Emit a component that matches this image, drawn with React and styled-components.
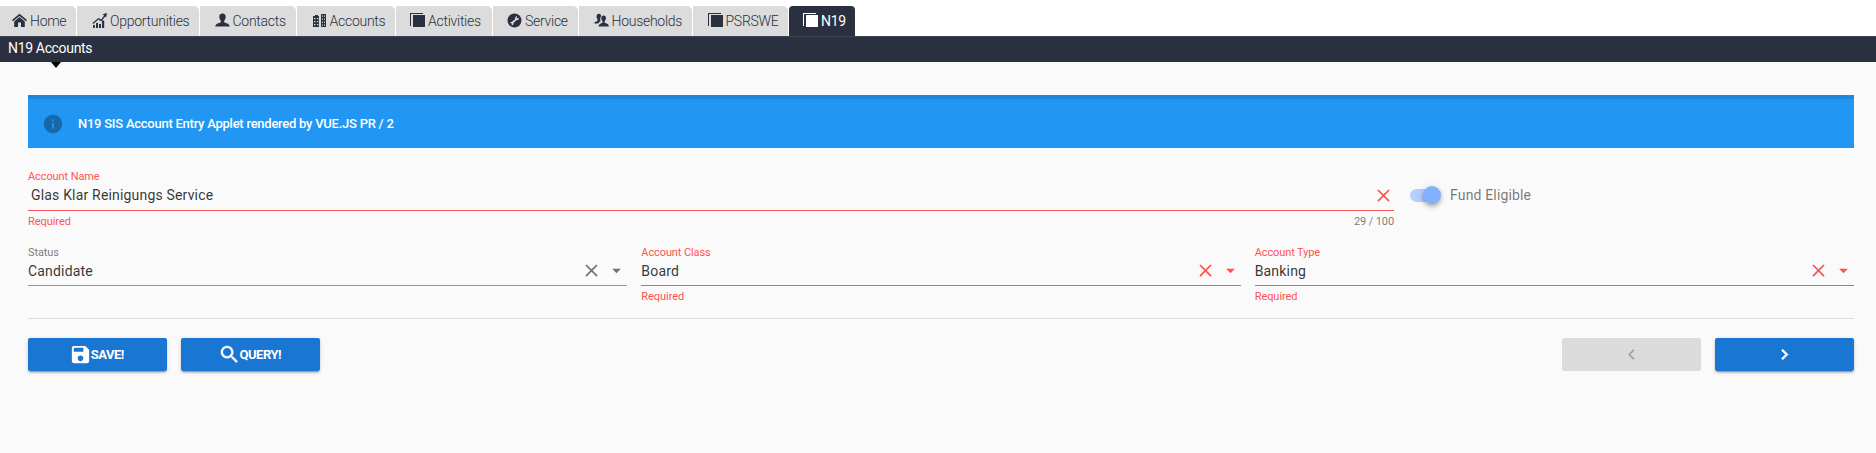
import React from 'react';
import styled, { createGlobalStyle, css } from 'styled-components';

const navy = '#2a3040';
const red = '#ff5252';
const blue = '#1976d2';

const GlobalStyle = createGlobalStyle`
  * { box-sizing: border-box; }
  body {
    margin: 0;
    background: #fafafa;
    font-family: Roboto, "Liberation Sans", sans-serif;
    color: rgba(0, 0, 0, 0.87);
  }
  svg { display: block; flex: none; }
`;

const Page = styled.div`
  width: 100%;
  height: 453px;
  overflow: hidden;
`;

const TabBar = styled.nav`
  display: flex;
  gap: 1px;
  height: 36px;
  padding-top: 6px;
  background: #fff;
`;

const Tab = styled.a`
  display: flex;
  align-items: center;
  width: ${(p) => p.$width}px;
  height: 30px;
  padding-left: ${(p) => p.$inset ?? 15}px;
  border-radius: 0 5px 0 0;
  background: ${(p) => (p.$active ? navy : '#dcdcdc')};
  color: ${(p) => (p.$active ? '#fff' : navy)};
  font-size: 14px;
  font-weight: ${(p) => (p.$active ? 400 : 300)};
  letter-spacing: -0.27px;
  white-space: nowrap;
  ${(p) => p.$active && css`border-radius: 4px 4px 0 0;`}
`;

const TabIcon = styled.svg`
  width: 15px;
  height: 15px;
  margin: 0 3px 1px 0;
  fill: currentColor;
`;

const SubBar = styled.div`
  position: relative;
  height: 26px;
  padding-left: 8px;
  background: ${navy};
  border-top: 1px solid #3f4453;
  color: #fff;
  font-size: 14px;
  line-height: 23px;
  letter-spacing: -0.34px;
`;

const Pointer = styled.span`
  position: absolute;
  left: 51px;
  top: 25px;
  border: 5px solid transparent;
  border-top: 6px solid #000;
  border-bottom: 0;
`;

const Content = styled.main`
  padding: 33px 22px 0 28px;
`;

const Banner = styled.div`
  display: flex;
  align-items: center;
  height: 53px;
  padding: 3px 0 0 14px;
  border-top: 4px solid #1e88dc;
  background: #2196f3;
  color: #fff;
  font-size: 13px;
  font-weight: 500;
`;

const BannerIcon = styled.svg`
  width: 22px;
  height: 22px;
  margin: 0 14px 2px 0;
  fill: rgba(0, 0, 0, 0.3);
`;

const BannerText = styled.span`
  line-height: 16px;
  margin-bottom: 2px;
  letter-spacing: -0.25px;
`;

const Row = styled.div`
  display: flex;
  gap: 14px;
  margin-top: ${(p) => p.$top}px;
`;

const FieldBox = styled.div`
  flex: ${(p) => (p.$width ? `0 0 ${p.$width}px` : '1 1 0')};
  min-width: 0;
  height: 61px;
  color: ${(p) => (p.$error ? red : 'rgba(0, 0, 0, 0.54)')};
`;

const Label = styled.div`
  height: 14px;
  padding-top: ${(p) => (p.$select ? 1 : 0)}px;
  font-size: 11px;
  line-height: 14px;
  letter-spacing: -0.1px;
`;

const Control = styled.div`
  display: flex;
  align-items: center;
  gap: 4px;
  height: 27px;
  padding-bottom: 4px;
  border-bottom: 1px solid ${(p) => (p.$error ? red : '#949494')};
`;

const Value = styled.span`
  flex: 1;
  padding: ${(p) => (p.$select ? 3 : 1)}px 0 0 ${(p) => p.$indent || 0}px;
  color: rgba(0, 0, 0, 0.8);
  font-size: 14px;
  line-height: 19px;
  letter-spacing: 0.18px;
`;

const FieldIcon = styled.svg`
  width: 21px;
  height: 21px;
  fill: currentColor;
`;

const Messages = styled.div`
  display: flex;
  justify-content: space-between;
  padding-top: 4px;
  font-size: 11px;
  line-height: 14px;
  letter-spacing: -0.05px;
`;

const Counter = styled.span`
  color: rgba(0, 0, 0, 0.54);
  letter-spacing: -0.1px;
`;

const SwitchLabel = styled.div`
  display: flex;
  align-items: center;
  height: 18px;
  margin: 16px 0 0 2px;
  color: rgba(0, 0, 0, 0.54);
  font-size: 14px;
  line-height: 18px;
  letter-spacing: 0.16px;
`;

const Track = styled.span`
  display: flex;
  align-items: center;
  justify-content: flex-end;
  width: 28px;
  height: 13px;
  margin-right: 12px;
  border-radius: 7px;
  background: #b5cfff;
`;

const Thumb = styled.span`
  flex: none;
  width: 18px;
  height: 18px;
  margin-right: -3px;
  border-radius: 50%;
  background: #82b1ff;
  box-shadow: 0 2px 4px -1px rgba(0, 0, 0, 0.2), 0 3px 5px rgba(0, 0, 0, 0.14),
    0 1px 8px rgba(0, 0, 0, 0.12);
`;

const Divider = styled.hr`
  height: 1px;
  margin: 12px 0 19px;
  border: 0;
  background: #dbdbdb;
`;

const Actions = styled.div`
  display: flex;
  gap: 14px;
`;

const Button = styled.button`
  display: flex;
  align-items: center;
  justify-content: center;
  width: 139px;
  height: 33px;
  padding: 0 0 1px;
  border: 0;
  border-radius: 2px;
  background: ${blue};
  color: #fff;
  font: 700 13px Roboto, "Liberation Sans", sans-serif;
  letter-spacing: -0.5px;
  box-shadow: 0 3px 1px -2px rgba(0, 0, 0, 0.2), 0 2px 2px rgba(0, 0, 0, 0.14),
    0 1px 5px rgba(0, 0, 0, 0.12);
  &:disabled {
    background: #dbdbdb;
    color: rgba(0, 0, 0, 0.26);
    box-shadow: none;
  }
`;

const ButtonIcon = styled.svg`
  width: ${(p) => p.$size}px;
  height: ${(p) => p.$size}px;
  margin: ${(p) => (p.$leading ? '0 -1.5px 0 -2px' : 0)};
  fill: currentColor;
`;

const Spacer = styled.span`
  flex: 1;
`;

const glyphs = {
  home: <path d="M7.500 .8 15 7l-1 1.200-6.500-5.300L1 8.200 0 7zM7.500 4l5.300 4.400V14H9V9.500H6V14H2.200V8.400z" />,
  chart: (
    <path d="M1 12h1.800v3H1zM4 10h2v5H4zM7 11h2v4H7zM10 7.500h2.200V15H10zM10.500 1.200 15 0l-.8 4.500-1-1.100-4 5L6.500 6.600 1.300 11l-.9-1L6.400 4.900 9 6.600l3.200-4z" />
  ),
  person: <path d="M7.500 .5c2.300 0 3.300 1.600 3.200 3.500-.1 2-.9 3-1.500 3.800v1.400c1.400.9 5.500 1.300 5.500 4.300H.3c0-3 4.100-3.400 5.500-4.300V7.800C5.200 7 4.400 6 4.300 4 4.200 2.100 5.200.5 7.500.5z" />,
  building: (
    <path fillRule="evenodd" d="M1 3h2V2h3v1h1v11H1zM9 1h5v13H9zM2 5v1.300h1.500V5zm3 0v1.300h1.300V5zM2 8v1.300h1.500V8zm3 0v1.300h1.300V8zm-3 3v1.300h1.500V11zm3 0v1.300h1.300V11zm5-8.500v1.300h1V2.500zm2 0v1.300h1V2.500zm-2 3v1.300h1V5.500zm2 0v1.300h1V5.500zm-2 3v1.300h1V8.500zm2 0v1.300h1V8.500zm-2 3v1.300h1v-1.300zm2 0v1.300h1v-1.300z" />
  ),
  square: <path d="M0 0h13v1H1v12H0zM3 2h12v12H3z" />,
  wrench: (
    <>
      <circle cx="7.500" cy="7.500" r="7" />
      <path fill="#dcdcdc" d="M3 9.200 5 8.800l3.300-2.800-.1-1.800L10 2.800l-.2 1.700 1 1 1.500-.5-1.200 2-1.800.3L6.500 10l-.3 1.700-1.700.7.4-1.500-.6-.6z" />
    </>
  ),
  people: (
    <>
      <path d="M4.800 .8c1.700 0 2.400 1.100 2.200 2.700-.9 1.300-1 3-.4 4.600L4 10.500H.3c0-1.700 1.700-1.900 3.200-2.500V6.500C2.300 4.800 2 .8 4.800.8z" />
      <path d="M9.600 2.500c2 0 2.500 1.500 2.300 3-.1 1.300-.7 2-1.200 2.600v1.700c1.300.6 4.200.9 4.200 3.700H4.600c0-2.500 2.400-2.900 3.900-3.700V8.100C7 6.500 6.600 2.500 9.600 2.500z" />
    </>
  ),
};

const tabs = [
  { label: 'Home', icon: 'home', width: 76, inset: 12 },
  { label: 'Opportunities', icon: 'chart', width: 122 },
  { label: 'Contacts', icon: 'person', width: 96, inset: 14.5 },
  { label: 'Accounts', icon: 'building', width: 98, inset: 14.5 },
  { label: 'Activities', icon: 'square', width: 96, inset: 14 },
  { label: 'Service', icon: 'wrench', width: 85, inset: 14 },
  { label: 'Households', icon: 'people', width: 113, inset: 14.5 },
  { label: 'PSRSWE', icon: 'square', width: 95, inset: 14.5 },
  { label: 'N19', icon: 'square', width: 66, inset: 14, active: true },
];

const CloseIcon = () => (
  <FieldIcon viewBox="0 0 24 24">
    <path d="M19 6.410 17.590 5 12 10.590 6.410 5 5 6.410 10.590 12 5 17.590 6.410 19 12 13.410 17.590 19 19 17.590 13.410 12z" />
  </FieldIcon>
);

function Field({ label, value, error, select, counter, width, indent }) {
  return (
    <FieldBox $error={error} $width={width}>
      <Label $select={select}>{label}</Label>
      <Control $error={error}>
        <Value $indent={indent} $select={select}>{value}</Value>
        <CloseIcon />
        {select && (
          <FieldIcon viewBox="0 0 24 24">
            <path d="m7 10 5 5 5-5z" />
          </FieldIcon>
        )}
      </Control>
      <Messages>
        <span>{error ? 'Required' : ''}</span>
        {counter && <Counter>{counter}</Counter>}
      </Messages>
    </FieldBox>
  );
}

export default function App() {
  return (
    <Page>
      <GlobalStyle />
      <TabBar>
        {tabs.map((t) => (
          <Tab key={t.label} $width={t.width} $inset={t.inset} $active={t.active}>
            <TabIcon viewBox="0 0 15 15">{glyphs[t.icon]}</TabIcon>
            {t.label}
          </Tab>
        ))}
      </TabBar>
      <SubBar>
        N19 Accounts
        <Pointer />
      </SubBar>
      <Content>
        <Banner>
          <BannerIcon viewBox="0 0 24 24">
            <path d="M12 2C6.480 2 2 6.480 2 12s4.480 10 10 10 10-4.480 10-10S17.520 2 12 2zm1 15h-2v-6h2v6zm0-8h-2V7h2v2z" />
          </BannerIcon>
          <BannerText>N19 SIS Account Entry Applet rendered by VUE.JS PR / 2</BannerText>
        </Banner>
        <Row $top={22}>
          <Field label="Account Name" value="Glas Klar Reinigungs Service" error counter="29 / 100" width={1366} indent={3} />
          <SwitchLabel>
            <Track>
              <Thumb />
            </Track>
            Fund Eligible
          </SwitchLabel>
        </Row>
        <Row $top={14}>
          <Field label="Status" value="Candidate" select />
          <Field label="Account Class" value="Board" error select />
          <Field label="Account Type" value="Banking" error select />
        </Row>
        <Divider />
        <Actions>
          <Button>
            <ButtonIcon $size={23} $leading viewBox="0 0 24 24">
              <path d="M17 3H5c-1.110 0-2 .9-2 2v14c0 1.100.89 2 2 2h14c1.100 0 2-.9 2-2V7l-4-4zm-5 16c-1.660 0-3-1.340-3-3s1.340-3 3-3 3 1.340 3 3-1.340 3-3 3zm3-10H5V5h10v4z" />
            </ButtonIcon>
            SAVE!
          </Button>
          <Button>
            <ButtonIcon $size={23} $leading viewBox="0 0 24 24" stroke="currentColor" strokeWidth="0.4">
              <path d="M15.500 14h-.79l-.28-.27C15.410 12.590 16 11.110 16 9.500 16 5.910 13.090 3 9.500 3S3 5.910 3 9.500 5.910 16 9.500 16c1.610 0 3.090-.59 4.230-1.570l.27.28v.79l5 4.990L20.490 19l-4.990-5zm-6 0C7.010 14 5 11.990 5 9.500S7.010 5 9.500 5 14 7.010 14 9.500 11.990 14 9.500 14z" />
            </ButtonIcon>
            QUERY!
          </Button>
          <Spacer />
          <Button disabled>
            <ButtonIcon $size={21} viewBox="0 0 24 24">
              <path d="M15.410 7.410 14 6l-6 6 6 6 1.410-1.410L10.830 12z" />
            </ButtonIcon>
          </Button>
          <Button>
            <ButtonIcon $size={21} viewBox="0 0 24 24" stroke="currentColor" strokeWidth="0.8">
              <path d="M10 6 8.590 7.410 13.170 12l-4.580 4.590L10 18l6-6z" />
            </ButtonIcon>
          </Button>
        </Actions>
      </Content>
    </Page>
  );
}
